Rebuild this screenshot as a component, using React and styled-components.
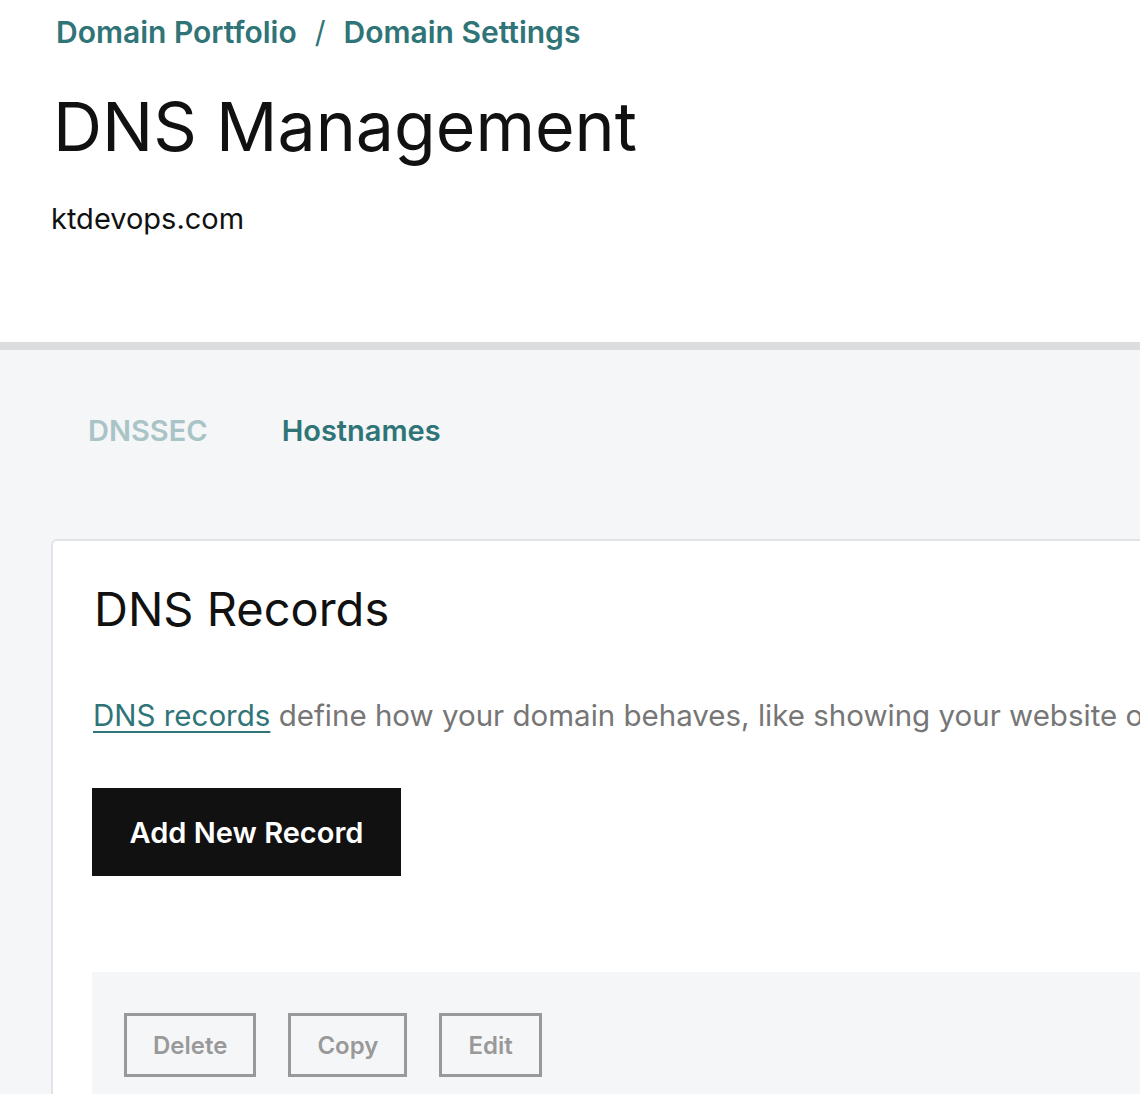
import React from 'react';
import styled, { createGlobalStyle } from 'styled-components';

const GlobalStyle = createGlobalStyle`
    html, body {
        margin: 0;
        padding: 0;
        overflow: hidden;
        background: #f5f6f8;
        font-family: Inter, "Open Sans", "Liberation Sans", sans-serif;
    }
`;

const Page = styled.div`
    width: 1140px;
    height: 1094px;
    overflow: hidden;
    display: flex;
    flex-direction: column;
`;

const Header = styled.header`
    background: #fff;
    height: 350px;
    padding: 12px 0 0 56px;
    box-sizing: border-box;
    border-bottom: 8px solid #dcdddf;
    flex-shrink: 0;
`;

const Crumbs = styled.nav`
    display: flex;
    align-items: center;
    gap: 18px;
    font-size: 30px;
    font-weight: 600;
    color: #2f7477;
    height: 40px;
`;

const Crumb = styled.a`
    color: inherit;
    text-decoration: none;
`;

const Slash = styled.span`
    font-weight: 400;
    color: #2f7477;
`;

const Title = styled.h1`
    margin: 40px 0 0 -3px;
    font-size: 68px;
    font-weight: 400;
    line-height: 1;
    color: #111;
`;

const Domain = styled.p`
    margin: 41px 0 0 -5px;
    font-size: 29px;
    color: #111;
`;

const Body = styled.main`
    flex: 1;
    background: #f5f6f8;
    padding: 50px 0 0 51px;
`;

const Tabs = styled.div`
    display: flex;
    gap: 74px;
    padding-left: 37px;
    height: 60px;
    align-items: center;
`;

const Tab = styled.span`
    font-size: 29px;
    font-weight: 600;
    color: ${p => (p.$active ? '#2f7477' : '#a9c4c6')};
`;

const Card = styled.section`
    margin-top: 79px;
    width: 1300px;
    background: #fff;
    border: 2px solid #e1e3e6;
    border-radius: 6px;
    padding: 40px 0 0 39px;
    height: 800px;
`;

const CardTitle = styled.h2`
    margin: 0 0 0 2px;
    font-size: 47px;
    line-height: 56px;
    font-weight: 400;
    color: #111;
`;

const Lead = styled.p`
    margin: 58px 0 0 1px;
    font-size: 29.5px;
    line-height: 40px;
    color: #767676;
    white-space: nowrap;

    & a {
        color: #2f7477;
        text-decoration: underline;
        text-underline-offset: 5px;
        text-decoration-thickness: 2px;
    }
`;

const PrimaryButton = styled.button`
    display: block;
    margin-top: 53px;
    width: 309px;
    height: 88px;
    border: none;
    border-radius: 0;
    background: #111;
    color: #fff;
    font-family: inherit;
    font-size: 29px;
    font-weight: 600;
`;

const Toolbar = styled.div`
    margin-top: 96px;
    background: #f5f6f8;
    display: flex;
    gap: 32px;
    padding: 41px 32px;
    height: 200px;
`;

const GhostButton = styled.button`
    height: 64px;
    padding: 0 ${p => p.$pad}px;
    border: 3px solid #999;
    background: transparent;
    color: #999;
    font-family: inherit;
    font-size: 24px;
    font-weight: 600;
`;

const App = () => (
    <Page>
        <GlobalStyle />
        <Header>
            <Crumbs>
                <Crumb href="#">Domain Portfolio</Crumb>
                <Slash>/</Slash>
                <Crumb href="#">Domain Settings</Crumb>
            </Crumbs>
            <Title>DNS Management</Title>
            <Domain>ktdevops.com</Domain>
        </Header>
        <Body>
            <Tabs>
                <Tab>DNSSEC</Tab>
                <Tab $active>Hostnames</Tab>
            </Tabs>
            <Card>
                <CardTitle>DNS Records</CardTitle>
                <Lead>
                    <a href="#">DNS records</a> define how your domain behaves, like showing your website on the web
                </Lead>
                <PrimaryButton>Add New Record</PrimaryButton>
                <Toolbar>
                    <GhostButton $pad={26}>Delete</GhostButton>
                    <GhostButton $pad={26}>Copy</GhostButton>
                    <GhostButton $pad={26}>Edit</GhostButton>
                </Toolbar>
            </Card>
        </Body>
    </Page>
);

export default App;
